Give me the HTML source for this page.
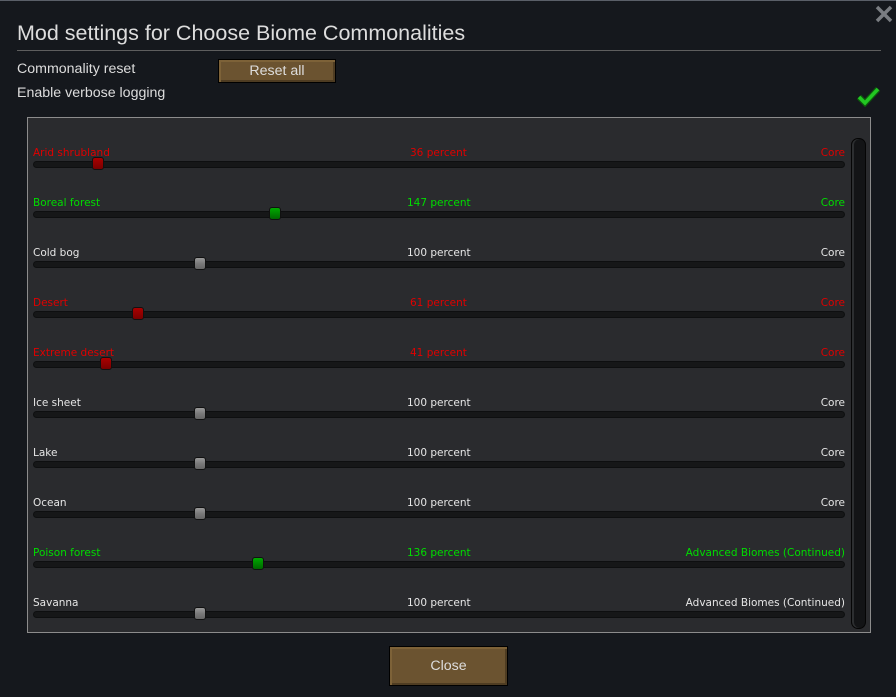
<!DOCTYPE html>
<html><head><style>
body{margin:0;width:896px;height:697px;background:#15181d;overflow:hidden;font-family:"Liberation Sans",sans-serif;position:relative;border-top:1px solid #5a5f68;box-sizing:border-box}
.a{position:absolute}
.t{color:#ddd;font-size:21.5px}
.s{color:#ddd;font-size:14.2px}
.btn{position:absolute;background:#6b5330;border:1px solid #000;box-shadow:inset 2px 2px 0 #7d6238,inset -2px -2px 0 #4e3c22;color:#ddd;text-align:center}
.panel{left:27px;top:116px;width:842px;height:514px;background:#2a2b2e;border:1px solid #8c8c8c}
.row{position:absolute;left:5px;width:812px;font-size:10.5px;height:20px;font-family:"DejaVu Sans",sans-serif}
.row span{position:absolute;top:0}
.tr{position:absolute;left:0;top:14px;width:810px;height:5px;background:#161718;border:1px solid #0e0f10;border-radius:4px;box-sizing:content-box}
.k{position:absolute;top:10px;width:10px;height:11px;border:1px solid #111;border-radius:3px}
.w{color:#e6e6e6}.r{color:#e00000}.g{color:#00dd00}
.kw{background:linear-gradient(#9a9a9a,#7a7a7a 50%,#666)}
.kr{background:linear-gradient(#a00,#7a0000)}
.kg{background:linear-gradient(#0a0,#060)}
</style></head><body>
<div class="a t" style="left:17px;top:20px">Mod settings for Choose Biome Commonalities</div>
<div class="a" style="left:17px;top:49px;width:864px;height:1px;background:#5e5e5e"></div>
<div class="a s" style="left:17px;top:60px">Commonality reset</div>
<div class="a s" style="left:17px;top:84px">Enable verbose logging</div>
<div class="btn" style="left:218px;top:58px;width:116px;height:22px;line-height:22px;font-size:14.2px">Reset all</div>
<svg class="a" style="left:874px;top:3px" width="20" height="20"><path d="M3 3L17 17M17 3L3 17" stroke="#7a7d82" stroke-width="3.5"/></svg>
<svg class="a" style="left:856px;top:84px" width="26" height="22"><path d="M3 12L9 18L22 4" stroke="#0c5a0c" stroke-width="6" fill="none"/><path d="M3 12L9 18L22 4" stroke="#22c722" stroke-width="3.5" fill="none"/></svg>
<div class="a panel">
<div class="a" style="left:823px;top:20px;width:13px;height:489px;background:#131416;border:1px solid #050505;border-radius:7px;box-shadow:inset 2px 0 0 #2c2e30"></div>
<div class="row r" style="top:29px"><span style="left:0">Arid shrubland</span><span style="left:377px">36 percent</span><span style="right:0">Core</span><div class="tr"></div><div class="k kr" style="left:59px"></div></div>
<div class="row g" style="top:79px"><span style="left:0">Boreal forest</span><span style="left:374px">147 percent</span><span style="right:0">Core</span><div class="tr"></div><div class="k kg" style="left:236px"></div></div>
<div class="row w" style="top:129px"><span style="left:0">Cold bog</span><span style="left:374px">100 percent</span><span style="right:0">Core</span><div class="tr"></div><div class="k kw" style="left:161px"></div></div>
<div class="row r" style="top:179px"><span style="left:0">Desert</span><span style="left:377px">61 percent</span><span style="right:0">Core</span><div class="tr"></div><div class="k kr" style="left:99px"></div></div>
<div class="row r" style="top:229px"><span style="left:0">Extreme desert</span><span style="left:377px">41 percent</span><span style="right:0">Core</span><div class="tr"></div><div class="k kr" style="left:67px"></div></div>
<div class="row w" style="top:279px"><span style="left:0">Ice sheet</span><span style="left:374px">100 percent</span><span style="right:0">Core</span><div class="tr"></div><div class="k kw" style="left:161px"></div></div>
<div class="row w" style="top:329px"><span style="left:0">Lake</span><span style="left:374px">100 percent</span><span style="right:0">Core</span><div class="tr"></div><div class="k kw" style="left:161px"></div></div>
<div class="row w" style="top:379px"><span style="left:0">Ocean</span><span style="left:374px">100 percent</span><span style="right:0">Core</span><div class="tr"></div><div class="k kw" style="left:161px"></div></div>
<div class="row g" style="top:429px"><span style="left:0">Poison forest</span><span style="left:374px">136 percent</span><span style="right:0">Advanced Biomes (Continued)</span><div class="tr"></div><div class="k kg" style="left:219px"></div></div>
<div class="row w" style="top:479px"><span style="left:0">Savanna</span><span style="left:374px">100 percent</span><span style="right:0">Advanced Biomes (Continued)</span><div class="tr"></div><div class="k kw" style="left:161px"></div></div>
</div>
<div class="btn" style="left:389px;top:645px;width:117px;height:38px;line-height:38px;font-size:14.2px">Close</div>
</body></html>
